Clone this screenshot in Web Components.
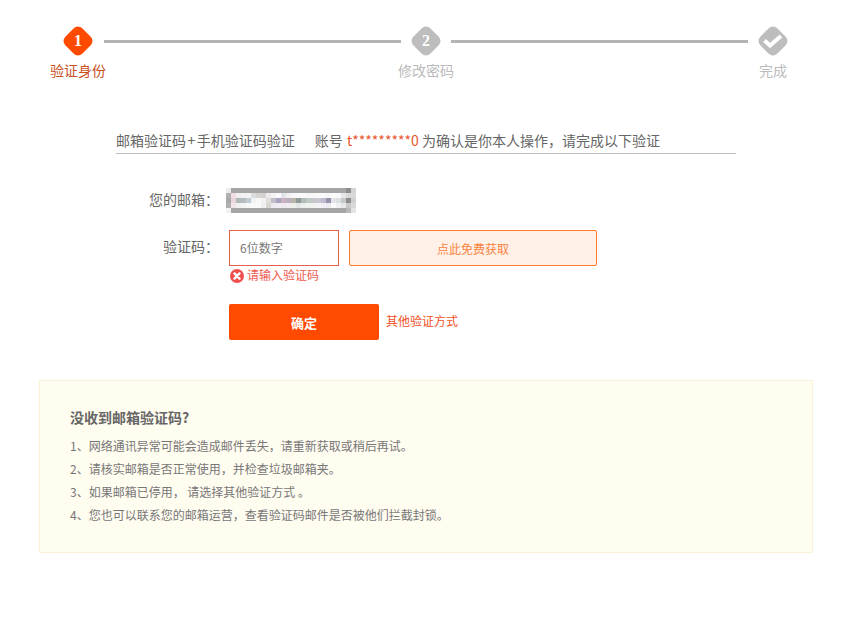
<!DOCTYPE html>
<html lang="zh-CN">
<head>
<meta charset="utf-8">
<title>验证身份</title>
<style>
  html, body { margin: 0; background: #fff; }
  body { font-family: "Noto Sans CJK SC", "Noto Sans", sans-serif; color: #666; }
</style>
</head>
<body>
<reset-page></reset-page>

<script>
// Paso del asistente: rombo con numero o icono, y su etiqueta debajo
class StepItem extends HTMLElement {
    constructor() {
        super();
        this.attachShadow({ mode: "open" });
        this.shadowRoot.innerHTML = `
            <style>
                :host {
                    display: flex;
                    flex-direction: column;
                    align-items: center;
                    width: 56px;
                    flex: none;
                    color: #bbb;
                    --tone: #bdbdbd;
                }
                :host([active]) { color: #c8501f; --tone: #ff4a00; }
                .mark {
                    width: 30px;
                    height: 30px;
                    display: grid;
                    place-items: center;
                    position: relative;
                    color: #fff;
                    font: bold 16px/30px "Liberation Serif", serif;
                }
                .mark::before {
                    content: "";
                    position: absolute;
                    left: 3px;
                    top: 3px;
                    width: 24px;
                    height: 24px;
                    border-radius: 6px;
                    background: var(--tone);
                    transform: rotate(45deg);
                }
                .mark > * { position: relative; }
                .label { font-size: 14px; line-height: 20px; margin-top: 4px; white-space: nowrap; }
            </style>
            <div class="mark"><span><slot name="mark"></slot></span></div>
            <div class="label"><slot></slot></div>
        `;
    }
}

// Barra de progreso con los tres pasos
class StepBar extends HTMLElement {
    constructor() {
        super();
        this.attachShadow({ mode: "open" });
        this.shadowRoot.innerHTML = `
            <style>
                :host {
                    display: flex;
                    align-items: flex-start;
                    padding: 26px 0 0 50px;
                }
                .line {
                    flex: none;
                    width: 297px;
                    height: 3px;
                    margin-top: 14px;
                    background: #b4b4b4;
                }
                .line.a { margin-left: -2px; margin-right: -3px; }
                .line.b { margin-left: -3px; margin-right: -3px; }
            </style>
            <step-item active><span slot="mark">1</span>验证身份</step-item>
            <div class="line a"></div>
            <step-item><span slot="mark">2</span>修改密码</step-item>
            <div class="line b"></div>
            <step-item>
                <svg slot="mark" width="22" height="16" viewBox="0 0 22 16" style="display:block">
                    <path d="M2.5 7.5 L8 12.5 L19 3" fill="none" stroke="#fff" stroke-width="4"/>
                </svg>
                完成
            </step-item>
        `;
    }
}

// Titulo del bloque de verificacion con el numero de cuenta
class VerifyHeading extends HTMLElement {
    constructor() {
        super();
        this.attachShadow({ mode: "open" });
        this.shadowRoot.innerHTML = `
            <style>
                :host {
                    display: flex;
                    width: 620px;
                    margin: 48px 0 0 116px;
                    padding-bottom: 1px;
                    border-bottom: 1px solid #bbb;
                    font-size: 14px;
                    line-height: 24px;
                    color: #666;
                    white-space: pre;
                }
                .plus { margin: 0 1.5px; }
                .account { margin-left: 20px; }
                em { font-style: normal; color: #e8552c; margin-left: 1px; }
            </style>
            <span>邮箱验证码<span class="plus">+</span>手机验证码验证</span>
            <span class="account">账号 <em>t*********0</em> 为确认是你本人操作，请完成以下验证</span>
        `;
    }
}

// Mosaico que tapa la direccion de correo
class BlurredMail extends HTMLElement {
    constructor() {
        super();
        this.attachShadow({ mode: "open" });
        const gray = "#a5a5a5";
        const rows = [
            ["#ececec", ...Array(23).fill(gray), "#8e8e8e", "#d4d4d4"],
            ["#b0b0b0", "#f0dde3", "#f0f0f0", "#f2f2f2", "#f2f2f2", "#dcdcdc", "#d8d4d4", "#d6d2d2", "#ececec", "#f4f4f4", "#fafafa", "#e4e4ee", "#f0f0f0", "#f8f8f8", "#fafafa", "#fafafa", "#f6f6f6", "#f8f8f8", "#fafafa", "#fafafa", "#f8f8f8", "#fcfcfc", "#fafafa", "#e8e8ec", "#d8d8d8", "#d8d8d8"],
            ["#a8a8a8", "#ecd4dc", "#aeb8b4", "#b4bcc0", "#c0ccd4", "#f0f2f4", "#f8f8f8", "#f4f0f0", "#e0dcd8", "#c4bcc8", "#a8a4c0", "#c8b0c0", "#bcb0c0", "#b8b4a8", "#8e9a94", "#b0bcb8", "#c0c8c4", "#c4c8c8", "#c8c8d0", "#c0bcd0", "#9c90ac", "#e4e4ea", "#dcdfe2", "#c4c8ca", "#8c8c8c", "#d0d0d0"],
            ["#b0b0b0", "#f0e4e8", "#f0f0f0", "#f4f4f4", "#f8f8f8", "#fafafa", "#fafafa", "#f0eeee", "#d8d4d0", "#ececf0", "#f0eef4", "#f0eaee", "#f0ecf0", "#eeeeea", "#e4e8e6", "#eef0ee", "#f0f2f0", "#f2f2f2", "#f4f4f6", "#f2f0f6", "#ecebf0", "#fafafa", "#f0f0f2", "#e8e8ea", "#c8c8c8", "#d8d8d8"],
            ["#f2f2f2", ...Array(23).fill(gray), "#b8b8b8", "#e4e4e4"]
        ];
        const rects = rows.map((row, y) =>
            row.map((c, x) => `<rect x="${x * 5}" y="${y * 5}" width="5" height="5" fill="${c}"/>`).join("")
        ).join("");
        this.shadowRoot.innerHTML = `
            <style>
                :host { display: block; width: 130px; height: 25px; margin-left: -3px; }
                svg { display: block; }
            </style>
            <svg width="130" height="25" viewBox="0 0 130 25" shape-rendering="crispEdges">${rects}</svg>
        `;
    }
}

// Formulario: correo, codigo, error y boton de confirmar
class VerifyForm extends HTMLElement {
    constructor() {
        super();
        this.attachShadow({ mode: "open" });
        this.shadowRoot.innerHTML = `
            <style>
                :host {
                    display: grid;
                    grid-template-columns: 103px 1fr;
                    column-gap: 10px;
                    margin: 33px 0 0 116px;
                    font-size: 14px;
                    color: #666;
                }
                .name { text-align: right; line-height: 24px; }
                .mail { display: flex; align-items: center; height: 26px; margin-bottom: 17px; }
                .name.code { line-height: 32px; }
                .code-row { display: flex; gap: 10px; }
                input {
                    box-sizing: border-box;
                    width: 110px;
                    height: 36px;
                    padding: 0 10px 2px;
                    border: 1px solid #e9604f;
                    border-radius: 0;
                    outline: none;
                    background: #fff;
                    font: 12px "Noto Sans CJK SC", sans-serif;
                }
                input::placeholder { color: #777; opacity: 1; }
                button { font-family: "Noto Sans CJK SC", sans-serif; cursor: pointer; padding: 0; }
                .send {
                    box-sizing: border-box;
                    width: 248px;
                    height: 36px;
                    border: 1px solid #ff7a26;
                    border-radius: 2px;
                    background: #fff0e8;
                    color: #f98440;
                    font-size: 12px;
                }
                .error {
                    grid-column: 2;
                    display: flex;
                    align-items: center;
                    gap: 3px;
                    height: 20px;
                    font-size: 12px;
                    line-height: 18px;
                    color: #ee5a50;
                }
                .error span { margin-bottom: 2px; }
                .error svg { display: block; margin-left: 1px; }
                .actions {
                    grid-column: 2;
                    display: flex;
                    align-items: center;
                    gap: 7px;
                    margin-top: 18px;
                }
                .ok {
                    width: 150px;
                    height: 36px;
                    border: 0;
                    border-radius: 2px;
                    background: #ff4a00;
                    color: #fff;
                    font-size: 13px;
                    font-weight: bold;
                }
                a { font-size: 12px; color: #f0501e; text-decoration: none; margin-top: -3px; }
            </style>
            <div class="name">您的邮箱：</div>
            <div class="mail"><blurred-mail></blurred-mail></div>
            <div class="name code">验证码：</div>
            <div class="code-row">
                <input placeholder="6位数字">
                <button class="send">点此免费获取</button>
            </div>
            <div class="error">
                <svg width="14" height="14" viewBox="0 0 15 15">
                    <circle cx="7.5" cy="7.5" r="7.5" fill="#ee5050"/>
                    <path d="M4.8 4.8 L10.2 10.2 M10.2 4.8 L4.8 10.2" stroke="#fff" stroke-width="2.6" stroke-linecap="round"/>
                </svg>
                <span>请输入验证码</span>
            </div>
            <div class="actions">
                <button class="ok">确定</button>
                <a href="#">其他验证方式</a>
            </div>
        `;
    }
}

// Recuadro de ayuda; el titulo y la lista llegan por slot
class TipPanel extends HTMLElement {
    constructor() {
        super();
        this.attachShadow({ mode: "open" });
        this.shadowRoot.innerHTML = `
            <style>
                :host {
                    display: block;
                    box-sizing: border-box;
                    width: 774px;
                    height: 173px;
                    margin: 40px 0 0 39px;
                    padding: 26px 30px 0;
                    background: #fffcf0;
                    border: 1px solid #faf1d9;
                    color: #777;
                }
                .title { font-size: 14px; font-weight: bold; line-height: 20px; color: #666; margin-bottom: 7px; }
                .list { font-size: 12px; line-height: 23px; }
            </style>
            <div class="title"><slot name="title"></slot></div>
            <div class="list"><slot></slot></div>
        `;
    }
}

class ResetPage extends HTMLElement {
    constructor() {
        super();
        this.attachShadow({ mode: "open" });
        this.shadowRoot.innerHTML = `
            <style>
                :host { display: block; width: 868px; }
            </style>
            <step-bar></step-bar>
            <verify-heading></verify-heading>
            <verify-form></verify-form>
            <tip-panel>
                <span slot="title">没收到邮箱验证码?</span>
                <div>1、网络通讯异常可能会造成邮件丢失，请重新获取或稍后再试。</div>
                <div>2、请核实邮箱是否正常使用，并检查垃圾邮箱夹。</div>
                <div>3、如果邮箱已停用， 请选择其他验证方式 。</div>
                <div>4、您也可以联系您的邮箱运营，查看验证码邮件是否被他们拦截封锁。</div>
            </tip-panel>
        `;
    }
}

customElements.define('step-item', StepItem);
customElements.define('step-bar', StepBar);
customElements.define('verify-heading', VerifyHeading);
customElements.define('blurred-mail', BlurredMail);
customElements.define('verify-form', VerifyForm);
customElements.define('tip-panel', TipPanel);
customElements.define('reset-page', ResetPage);
</script>
</body>
</html>
